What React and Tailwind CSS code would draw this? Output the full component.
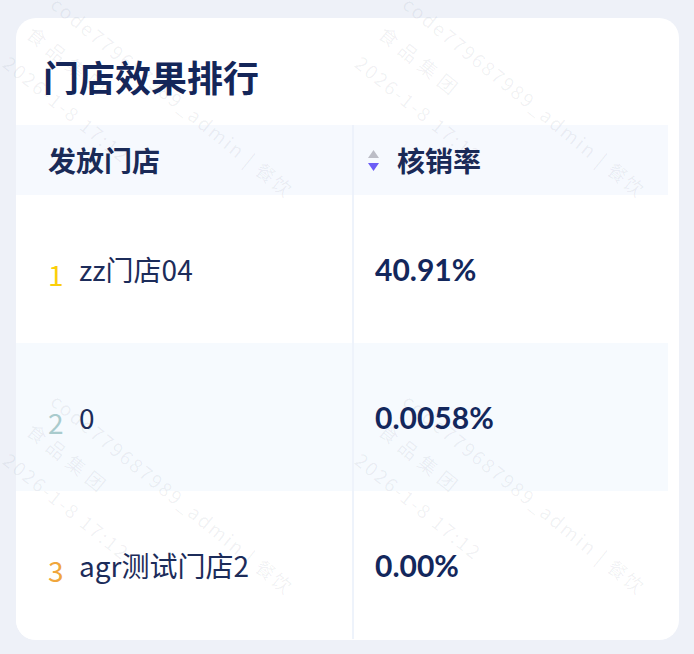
import React from "react";

function SortIcon() {
  return (
    <svg width="11" height="21" viewBox="0 0 11 21" className="shrink-0">
      <polygon points="5.5,0 11,8 0,8" fill="#bcbdc6" />
      <polygon points="0,13 11,13 5.5,21" fill="#6b5cf6" />
    </svg>
  );
}

function Mark({ className }) {
  return (
    <div
      className={
        "pointer-events-none absolute origin-top-left rotate-[39deg] whitespace-nowrap font-['Noto_Sans_CJK_SC','Noto_Sans',sans-serif] text-[19px] leading-[38px] tracking-[2px] text-[#26345a]/[0.065] " +
        className
      }
    >
      <div>code779687989_admin | 餐饮</div>
      <div className="tracking-[6px]">食品集团</div>
      <div>2026-1-8 17:12</div>
    </div>
  );
}

const rows = [
  { rank: "1", rankColor: "text-[#fbcf0a]", name: "zz门店04", value: "40.91%", bg: "bg-white" },
  { rank: "2", rankColor: "text-[#a9cbcd]", name: "0", value: "0.0058%", bg: "bg-[#f6fafe]" },
  { rank: "3", rankColor: "text-[#f0a63c]", name: "agr测试门店2", value: "0.00%", bg: "bg-white" },
];

export default function App() {
  return (
    <div className="relative h-[654px] w-[694px] overflow-hidden bg-[#eef1f8] pb-[14px] pl-[16px] pr-[15px] pt-[18px] font-['Noto_Sans_CJK_SC','Noto_Sans',sans-serif]">
      <div className="flex h-full flex-col overflow-hidden rounded-[20px] bg-white">
        <div className="h-[107px] pl-[27px] pt-[34px] text-[36px] font-bold leading-[48px] text-[#142659]">
          门店效果排行
        </div>
        <div className="mr-[11px] flex flex-col">
          <div className="flex h-[70px] bg-[#f6f9fe]">
            <div className="flex w-[338px] items-center border-r-2 border-[#edf2fb] pl-[32px] text-[28px] font-bold text-[#1a2a57]">
              发放门店
            </div>
            <div className="flex flex-1 items-center pl-[14px]">
              <SortIcon />
              <span className="ml-[18px] text-[28px] font-bold text-[#1a2a57]">核销率</span>
            </div>
          </div>
          {rows.map((r) => (
            <div key={r.rank} className={"flex h-[148px] " + r.bg}>
              <div className="flex w-[338px] items-center border-r-2 border-[#eef3fb] pl-[32px]">
                <span className={"mt-[9px] w-[31px] shrink-0 text-[28px] leading-none " + r.rankColor}>{r.rank}</span>
                <span className="text-[28px] leading-none text-[#1c2c5a]">{r.name}</span>
              </div>
              <div className="flex flex-1 items-center pl-[21px]">
                <span className="font-['Lato',sans-serif] text-[30px] font-bold leading-none text-[#13275c]">
                  {r.value}
                </span>
              </div>
            </div>
          ))}
        </div>
      </div>
      <Mark className="left-[66px] top-[-14px]" />
      <Mark className="left-[418px] top-[-14px]" />
      <Mark className="left-[66px] top-[383px]" />
      <Mark className="left-[418px] top-[383px]" />
    </div>
  );
}
